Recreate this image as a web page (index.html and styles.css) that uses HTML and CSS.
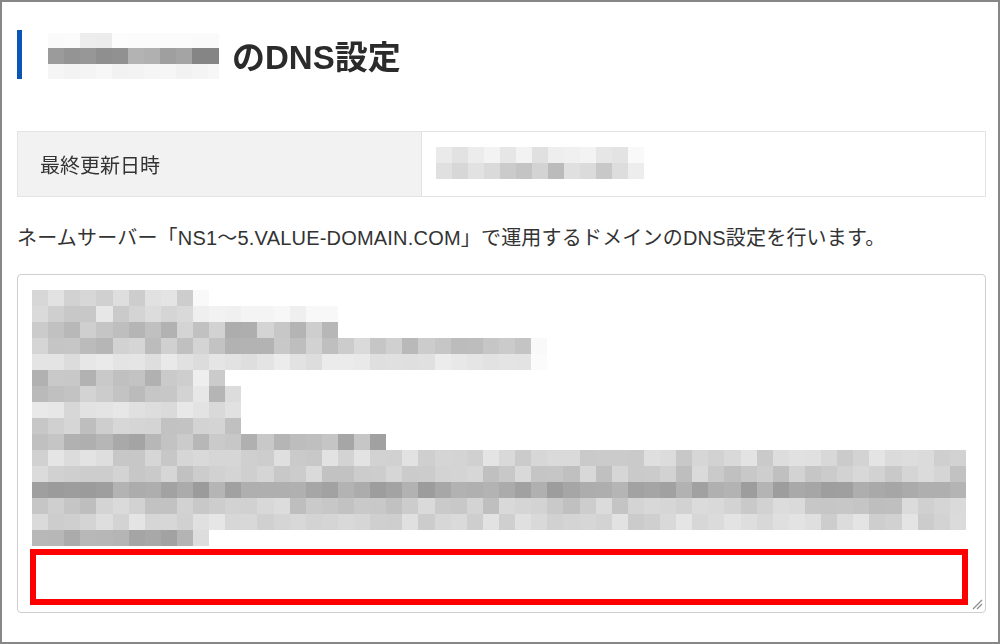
FILE: index.html
```html
<!doctype html>
<html lang="ja">
<head>
    <meta charset="UTF-8">
    <meta name="viewport" content="width=device-width, initial-scale=1.0">
    <title>DNS設定</title>
    <link rel="stylesheet" href="styles.css">
</head>
<body>

    <div class="frame">

        <h1 class="page-title">
            <span class="bar"></span>
            <canvas id="domain-mosaic" width="171" height="46"></canvas>
            <span>のDNS設定</span>
        </h1>

        <table class="info-table">
            <tr>
                <th>最終更新日時</th>
                <td><canvas id="date-mosaic" width="209" height="32"></canvas></td>
            </tr>
        </table>

        <p class="lead">ネームサーバー「NS1～5.VALUE-DOMAIN.COM」で運用するドメインのDNS設定を行います。</p>

        <div class="records">
            <canvas id="records-mosaic" width="934" height="256"></canvas>
            <div class="highlight"></div>
            <svg class="grip" width="11" height="11" viewBox="0 0 11 11">
                <path d="M10 1 L1 10 M10 5 L5 10" stroke="#8c8c8c" stroke-width="1.2" fill="none"/>
            </svg>
        </div>

    </div>

    <script>
        // the screenshot hides the domain, the date and the records under a mosaic
        let seed = 11;
        function rand() {
            seed = (seed * 16807) % 2147483647;
            return seed / 2147483647;
        }

        function drawMosaic(id, rows, cellW, cellH) {
            let canvas = document.getElementById(id);
            let ctx = canvas.getContext("2d");
            for (let r = 0; r < rows.length; r++) {
                let x = 0;
                let y1 = Math.round(r * cellH);
                let y2 = Math.round((r + 1) * cellH);
                for (let s = 0; s < rows[r].length; s++) {
                    let seg = rows[r][s];
                    for (let c = 0; c < seg[0]; c++) {
                        let g = Math.round(seg[1] + (rand() - 0.5) * seg[2]);
                        g = Math.max(0, Math.min(255, g));
                        ctx.fillStyle = "rgb(" + g + "," + g + "," + g + ")";
                        ctx.fillRect(Math.round(x), y1, Math.round(x + cellW) - Math.round(x), y2 - y1);
                        x += cellW;
                    }
                }
            }
        }

        drawMosaic("domain-mosaic", [
            [[2, 251, 3], [2, 238, 4], [7, 251, 3]],
            [[3, 152, 12], [2, 142, 8], [2, 180, 10], [2, 162, 10], [2, 132, 12]],
            [[11, 245, 6]]
        ], 16, 46 / 3);

        drawMosaic("date-mosaic", [
            [[12, 234, 20], [1, 248, 4]],
            [[12, 206, 40], [1, 240, 6]]
        ], 16, 16);

        drawMosaic("records-mosaic", [
            [[10, 208, 40], [1, 248, 4]],
            [[10, 218, 40], [9, 243, 10]],
            [[19, 190, 48]],
            [[31, 198, 40], [1, 250, 3]],
            [[31, 228, 20], [1, 250, 3]],
            [[10, 192, 30], [1, 236, 6], [1, 206, 10]],
            [[10, 196, 30], [1, 232, 6], [1, 185, 10], [1, 220, 6]],
            [[13, 224, 20]],
            [[13, 204, 30]],
            [[22, 182, 44]],
            [[58, 214, 30]],
            [[58, 205, 30]],
            [[58, 168, 26]],
            [[58, 205, 32]],
            [[58, 216, 30]],
            [[10, 175, 30], [1, 220, 6]]
        ], 934 / 58, 16);
    </script>
</body>
</html>
```

FILE: styles.css
```css
body {
    margin: 0;
    background: #fff;
    color: #333;
    font-family: "Liberation Sans", "Noto Sans CJK JP", sans-serif;
}
.frame {
    box-sizing: border-box;
    height: 644px;
    border: 2px solid #878787;
    padding: 28px 12px 0 15px;
}
canvas {
    display: block;
}
.page-title {
    display: flex;
    align-items: center;
    height: 49px;
    margin: 0;
    font-size: 33px;
    font-weight: bold;
    color: #2b2b2b;
}
.page-title .bar {
    width: 5px;
    height: 49px;
    margin-right: 26px;
    background-color: #0b56b4;
}
.page-title canvas {
    margin: 3px 13px 0 0;
}
.info-table {
    width: 100%;
    margin-top: 52px;
    border-collapse: collapse;
}
.info-table th, .info-table td {
    height: 64px;
    padding: 0;
    border: 1px solid #e3e3e3;
}
.info-table th {
    width: 381px;
    padding-left: 22px;
    background-color: #f2f2f2;
    text-align: left;
    font-size: 20px;
    font-weight: normal;
}
.info-table td {
    padding-left: 14px;
}
.info-table td canvas {
    margin-top: -3px;
}
.lead {
    margin: 26px 0 21px;
    font-size: 20px;
    line-height: 30px;
    letter-spacing: 0.2px;
}
.records {
    position: relative;
    padding: 15px 17px 7px 12px;
    border: 1px solid #cfcfcf;
    border-radius: 4px;
}
.records canvas {
    margin-left: 2px;
}
.highlight {
    box-sizing: border-box;
    height: 56px;
    margin-top: 3px;
    border: 6px solid #ff0000;
}
.grip {
    position: absolute;
    right: 2px;
    bottom: 2px;
}
```
